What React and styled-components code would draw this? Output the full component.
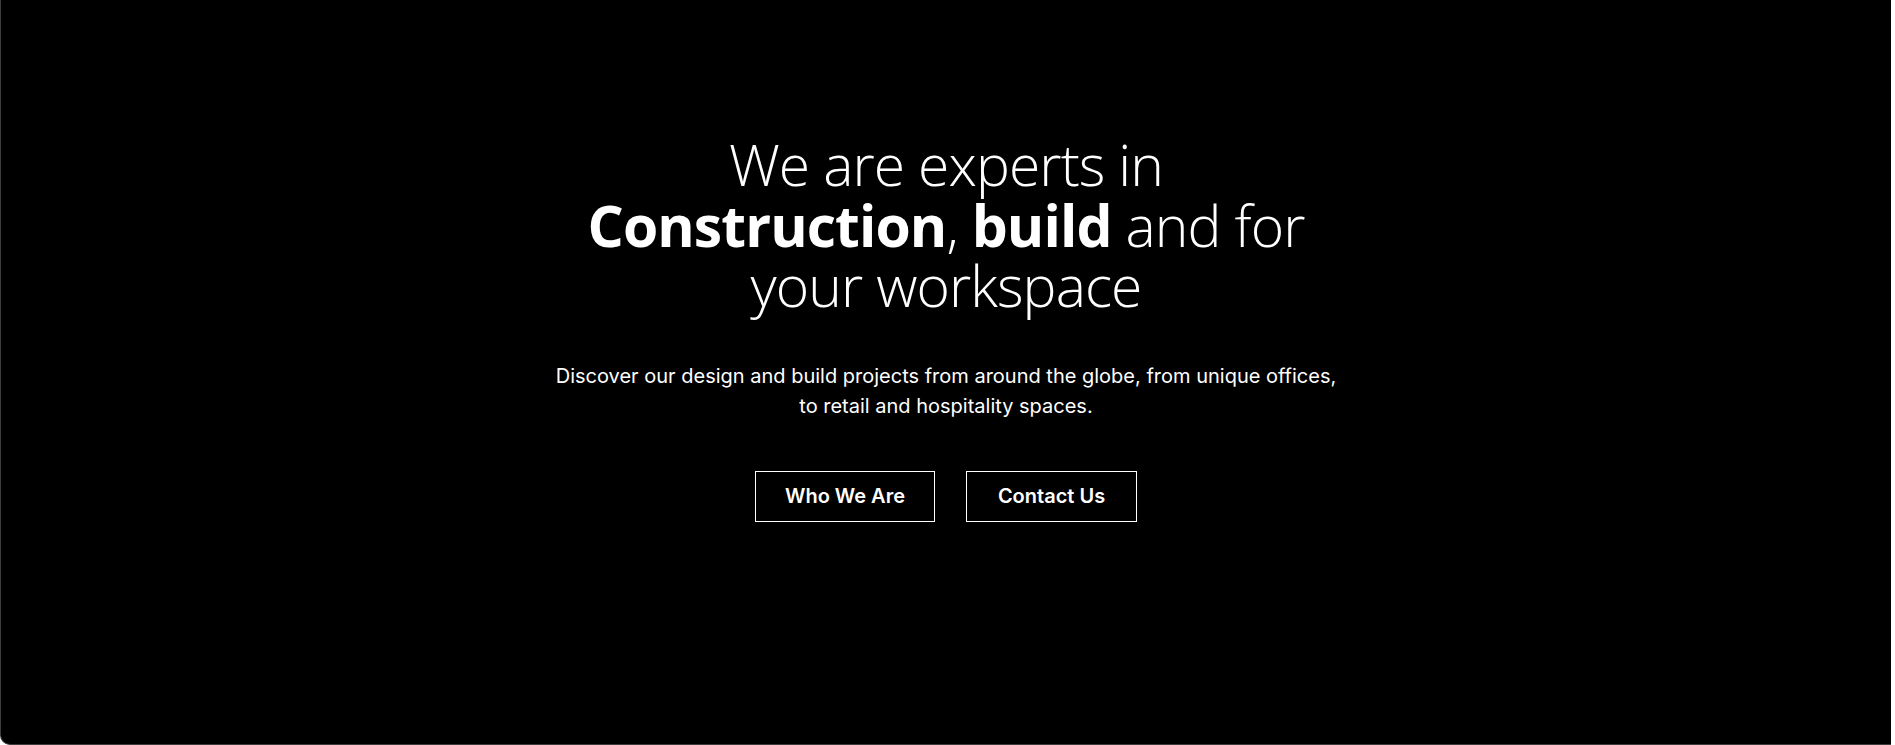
import React from 'react';
import styled, { createGlobalStyle } from 'styled-components';

const GlobalStyle = createGlobalStyle`
  html, body {
    margin: 0;
    padding: 0;
    background: #ffffff;
  }
  * {
    box-sizing: border-box;
  }
`;

const Hero = styled.section`
  width: calc(100% - 4px);
  height: 745px;
  background-color: #000000;
  border-left: 1px solid #3c3c3c;
  border-bottom: 1px solid #3c3c3c;
  border-radius: 0 0 0 10px;
  display: flex;
  flex-direction: column;
  align-items: center;
  padding-top: 134px;
  color: #ffffff;
`;

const Title = styled.h1`
  margin: 0;
  font-family: 'Open Sans', 'Noto Sans', sans-serif;
  font-weight: 300;
  font-size: 57px;
  line-height: 60.5px;
  letter-spacing: -0.9px;
  text-align: center;
  max-width: 760px;

  b {
    font-weight: 700;
  }
`;

const Lead = styled.p`
  margin: 45px 0 0;
  font-family: Inter, 'Noto Sans', sans-serif;
  font-size: 20px;
  line-height: 30px;
  text-align: center;
  max-width: 800px;
`;

const Actions = styled.div`
  display: flex;
  gap: 31px;
  margin-top: 50px;
`;

const OutlineButton = styled.a`
  display: inline-flex;
  align-items: center;
  justify-content: center;
  height: 51px;
  width: ${(p) => p.$width}px;
  border: 1px solid #ffffff;
  color: #ffffff;
  font-family: Inter, 'Noto Sans', sans-serif;
  font-weight: 600;
  font-size: 20px;
  text-decoration: none;
  cursor: pointer;
`;

const App = () => {
  return (
    <>
      <GlobalStyle />
      <Hero>
        <Title>
          We are experts in <b>Construction</b>, <b>build</b> and for your workspace
        </Title>
        <Lead>
          Discover our design and build projects from around the globe, from unique offices,
          to retail and hospitality spaces.
        </Lead>
        <Actions>
          <OutlineButton $width={180}>Who We Are</OutlineButton>
          <OutlineButton $width={171}>Contact Us</OutlineButton>
        </Actions>
      </Hero>
    </>
  );
};

export default App;
